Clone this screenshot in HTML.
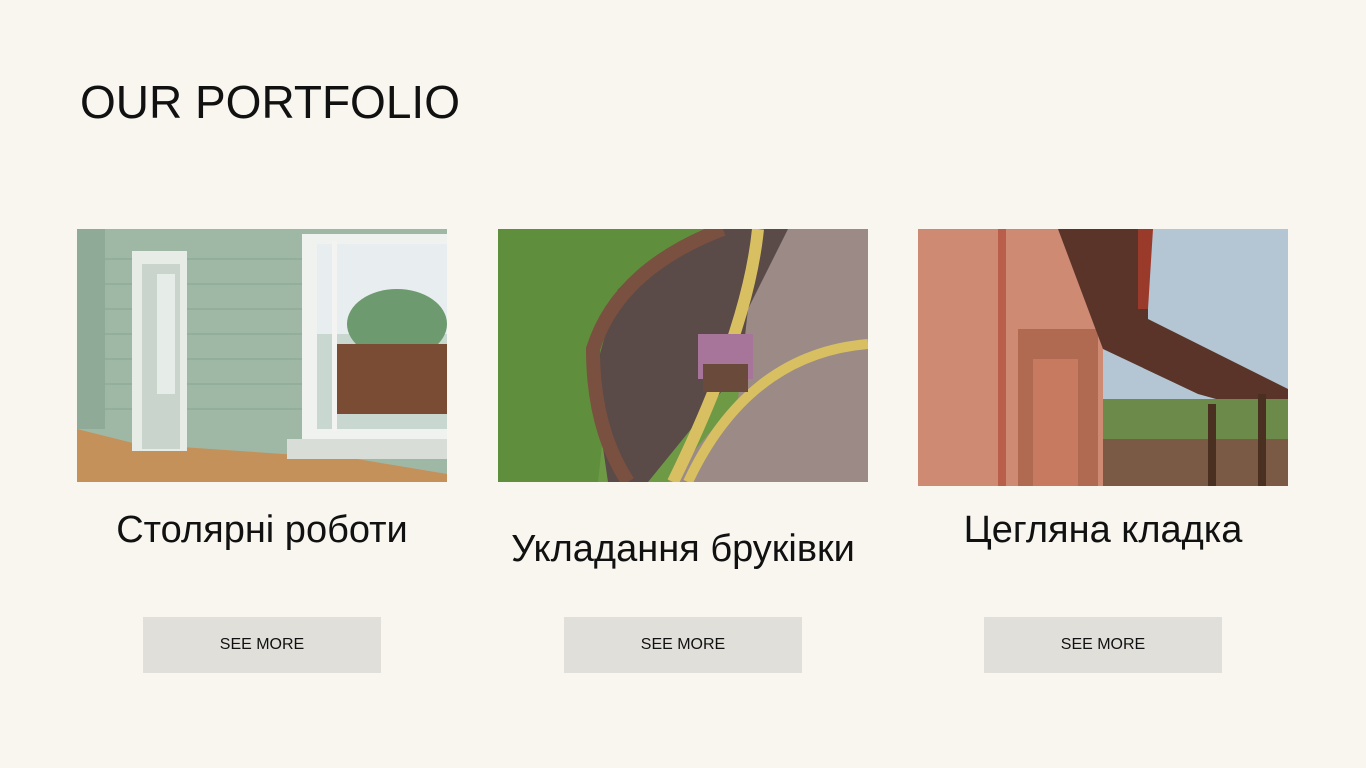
<!DOCTYPE html>
<html><head><meta charset="utf-8"><style>
body{margin:0;width:1366px;height:768px;background:#f9f6f0;position:relative;overflow:hidden;font-family:"Liberation Sans",sans-serif;color:#111}
h1{position:absolute;left:80px;top:77px;margin:0;font-weight:400;font-size:46px;line-height:50px}
.img{position:absolute;overflow:hidden}
.cap{position:absolute;width:420px;text-align:center;font-size:38px;font-weight:400;line-height:44px}
.btn{position:absolute;width:238px;height:56px;background:#e0dfda;text-align:center;line-height:56px;font-size:16px;color:#111}
</style></head><body>
<h1>OUR PORTFOLIO</h1>

<div class="img" style="left:77px;top:229px;width:370px;height:253px">
<svg width="370" height="253">
<rect width="370" height="253" fill="#9fb8a6"/>
<rect x="0" y="0" width="28" height="200" fill="#8fab98"/>
<g stroke="#8aa391" stroke-width="1">
<line x1="28" y1="30" x2="370" y2="30"/><line x1="28" y1="55" x2="370" y2="55"/><line x1="28" y1="80" x2="370" y2="80"/><line x1="28" y1="105" x2="370" y2="105"/><line x1="28" y1="130" x2="370" y2="130"/><line x1="28" y1="155" x2="370" y2="155"/><line x1="28" y1="180" x2="370" y2="180"/></g>
<polygon points="0,200 60,215 280,230 370,245 370,253 0,253" fill="#c4915a"/>
<rect x="55" y="22" width="55" height="200" fill="#e8ece6"/>
<rect x="65" y="35" width="38" height="185" fill="#c9d4cc"/>
<rect x="80" y="45" width="18" height="120" fill="#e6ece8"/>
<rect x="225" y="5" width="145" height="220" fill="#f0f2ef"/>
<rect x="240" y="15" width="130" height="185" fill="#c8d8d0"/>
<rect x="240" y="15" width="130" height="90" fill="#e8eef0"/>
<ellipse cx="320" cy="95" rx="50" ry="35" fill="#6e9a70"/>
<rect x="260" y="115" width="110" height="70" fill="#7a4c34"/>
<rect x="255" y="12" width="5" height="190" fill="#f3f4f2"/>
<rect x="210" y="210" width="160" height="20" fill="#d8ddd8"/>
</svg></div>

<div class="img" style="left:498px;top:229px;width:370px;height:253px">
<svg width="370" height="253">
<rect width="370" height="253" fill="#6e9a45"/>
<polygon points="0,0 230,0 120,70 100,253 0,253" fill="#5f8f3c"/>
<polygon points="225,0 300,0 260,60 250,130 150,253 110,253 95,150 120,60" fill="#5a4a48"/>
<path d="M225,0 Q120,40 95,120 Q95,200 130,253" stroke="#7a5040" stroke-width="14" fill="none"/>
<polygon points="290,0 370,0 370,253 170,253 240,170 250,80" fill="#9b8a86"/>
<path d="M260,0 Q250,100 175,253" stroke="#d8c062" stroke-width="12" fill="none"/>
<path d="M370,115 Q250,125 190,253" stroke="#d8c062" stroke-width="10" fill="none"/>
<rect x="200" y="105" width="55" height="45" fill="#a8759a"/>
<rect x="205" y="135" width="45" height="28" fill="#6a4a3a"/>
</svg></div>

<div class="img" style="left:918px;top:229px;width:370px;height:257px">
<svg width="370" height="257">
<rect width="370" height="257" fill="#b4c6d4"/>
<rect x="0" y="0" width="185" height="257" fill="#cf8a74"/>
<rect x="100" y="100" width="80" height="157" fill="#b06a52"/>
<rect x="115" y="130" width="45" height="127" fill="#c87a60"/>
<rect x="80" y="0" width="8" height="257" fill="#b85e4a"/>
<polygon points="140,0 230,0 230,90 370,160 370,190 280,165 185,120" fill="#5a3428"/>
<polygon points="220,0 235,0 230,80 220,80" fill="#9a3a2a"/>
<rect x="185" y="170" width="185" height="40" fill="#6c8a4a"/>
<rect x="185" y="210" width="185" height="47" fill="#7a5a44"/>
<rect x="290" y="175" width="8" height="82" fill="#4a3020"/>
<rect x="340" y="165" width="8" height="92" fill="#4a3020"/>
</svg></div>

<div class="cap" style="left:52px;top:508px">Столярні роботи</div>
<div class="cap" style="left:473px;top:527px">Укладання бруківки</div>
<div class="cap" style="left:893px;top:508px">Цегляна кладка</div>

<div class="btn" style="left:143px;top:617px">SEE MORE</div>
<div class="btn" style="left:564px;top:617px">SEE MORE</div>
<div class="btn" style="left:984px;top:617px">SEE MORE</div>
</body></html>
